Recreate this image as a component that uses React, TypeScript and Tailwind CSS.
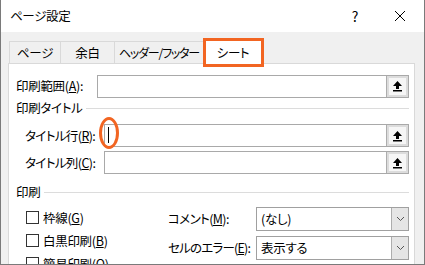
import React from "react";

const UpArrow = () => (
  <svg width="11" height="12" viewBox="0 0 11 12">
    <path d="M5.5 1 L10 6 L7 6 L7 9 L4 9 L4 6 L1 6 Z" fill="#000" />
    <rect x="1" y="10" width="9" height="1.5" fill="#000" />
  </svg>
);

const Chevron = () => (
  <svg width="9" height="6" viewBox="0 0 9 6">
    <path d="M1 1 L4.5 4.5 L8 1" stroke="#555" strokeWidth="1" fill="none" />
  </svg>
);

function RefInput({ children }: { children?: React.ReactNode }) {
  return (
    <div className="flex-1 h-[23px] flex border border-[#a9a9a9] bg-white relative">
      <div className="flex-1 relative">{children}</div>
      <div className="w-[22px] border-l border-[#adadad] bg-[#dcdcdc] p-[2px] flex">
        <div className="flex-1 bg-[#f6f6f6] flex items-center justify-center">
          <UpArrow />
        </div>
      </div>
    </div>
  );
}

function Combo({ value }: { value: string }) {
  return (
    <div className="flex-1 h-[24px] flex border border-[#a0a0a0] bg-white">
      <div className="flex-1 flex items-center pl-[4px]">{value}</div>
      <div className="w-[17px] border-l border-[#adadad] bg-[#e5e5e5] flex items-center justify-center">
        <Chevron />
      </div>
    </div>
  );
}

function Check({ label, k }: { label: string; k: string }) {
  return (
    <div className="h-[23px] flex items-center">
      <div className="w-[13px] h-[13px] border border-[#333] bg-white" />
      <span className="ml-[4px] whitespace-nowrap">
        {label}(<span className="underline">{k}</span>)
      </span>
    </div>
  );
}

export default function App() {
  return (
    <div className="w-[425px] h-[265px] flex flex-col overflow-hidden border-l border-r border-b border-[#7a7a7a] text-[12.5px] leading-[16px] tracking-[-0.3px] text-black font-['Noto_Sans_CJK_JP','Noto_Sans',sans-serif] [font-feature-settings:'palt']">
      <div className="h-[32px] bg-white flex items-center pl-[9px] shrink-0">
        <span className="flex-1 -mt-[1px]">ページ設定</span>
        <span className="text-[14px] mr-[36px] -mt-[1px]">?</span>
        <svg width="12" height="12" viewBox="0 0 12 12" className="mr-[18px] -mt-[1px]">
          <path d="M1 1 L11 11 M11 1 L1 11" stroke="#000" strokeWidth="1" />
        </svg>
      </div>
      <div className="flex-1 min-h-0 overflow-hidden bg-[#f0f0f0] pl-[7px] pr-[9px] pt-[6px]">
        <div className="h-[25px] flex items-end ml-[1px] whitespace-nowrap">
          <div className="w-[51px] h-[22px] border-l border-t border-[#d9d9d9] flex items-center justify-center">ページ</div>
          <div className="w-[54px] h-[22px] border-l border-t border-[#d9d9d9] flex items-center justify-center">余白</div>
          <div className="w-[89px] h-[22px] border-l border-t border-[#d9d9d9] flex items-center justify-center text-[12px] tracking-[-1.2px]">ヘッダー/フッター</div>
          <div className="relative w-[60px] h-[26px] -mb-px bg-white border-l border-r border-t border-[#d9d9d9] flex items-center justify-center pt-[2px]">
            シート
            <div className="absolute -left-px -top-px w-[61px] h-[29px] border-[3px] border-[#f26522] z-10" />
          </div>
        </div>
        <div className="w-[407px] bg-white border border-[#d9d9d9] pt-[10px] pl-[7px] pr-[5px] pb-[30px] whitespace-nowrap">
          <div className="h-[24px] flex items-center">
            <span className="w-[81px] shrink-0">
              印刷範囲(<span className="underline">A</span>):
            </span>
            <RefInput />
          </div>
          <div className="mt-[2px] h-[16px] flex items-center">
            <span>印刷タイトル</span>
            <div className="flex-1 h-px bg-[#dcdcdc] ml-[4px]" />
          </div>
          <div className="mt-[8px] h-[23px] flex items-center">
            <span className="w-[88px] shrink-0 pl-[9px] tracking-[-0.6px]">
              タイトル行(<span className="underline">R</span>):
            </span>
            <RefInput>
              <div className="absolute left-[3px] top-[2px] w-px h-[16px] bg-black" />
              <div className="absolute -left-[6px] -top-[8px] w-[20px] h-[32px] rounded-[50%] border-[3px] border-[#f26522]" />
            </RefInput>
          </div>
          <div className="mt-[4px] h-[23px] flex items-center">
            <span className="w-[88px] shrink-0 pl-[9px] tracking-[-0.6px]">
              タイトル列(<span className="underline">C</span>):
            </span>
            <RefInput />
          </div>
          <div className="mt-[10px] h-[16px] flex items-center">
            <span>印刷</span>
            <div className="flex-1 h-px bg-[#dcdcdc] ml-[4px]" />
          </div>
          <div className="flex">
            <div className="w-[152px] shrink-0 pl-[10px] pt-[6px]">
              <Check label="枠線" k="G" />
              <Check label="白黒印刷" k="B" />
              <Check label="簡易印刷" k="Q" />
            </div>
            <div className="flex-1 pt-[7px] flex flex-col gap-[5px]">
              <div className="flex items-center">
                <span className="w-[88px] shrink-0 tracking-[-0.6px]">
                  コメント(<span className="underline">M</span>):
                </span>
                <Combo value="(なし)" />
              </div>
              <div className="flex items-center">
                <span className="w-[88px] shrink-0 tracking-[-0.8px]">
                  セルのエラー(<span className="underline">E</span>):
                </span>
                <Combo value="表示する" />
              </div>
            </div>
          </div>
        </div>
      </div>
    </div>
  );
}
